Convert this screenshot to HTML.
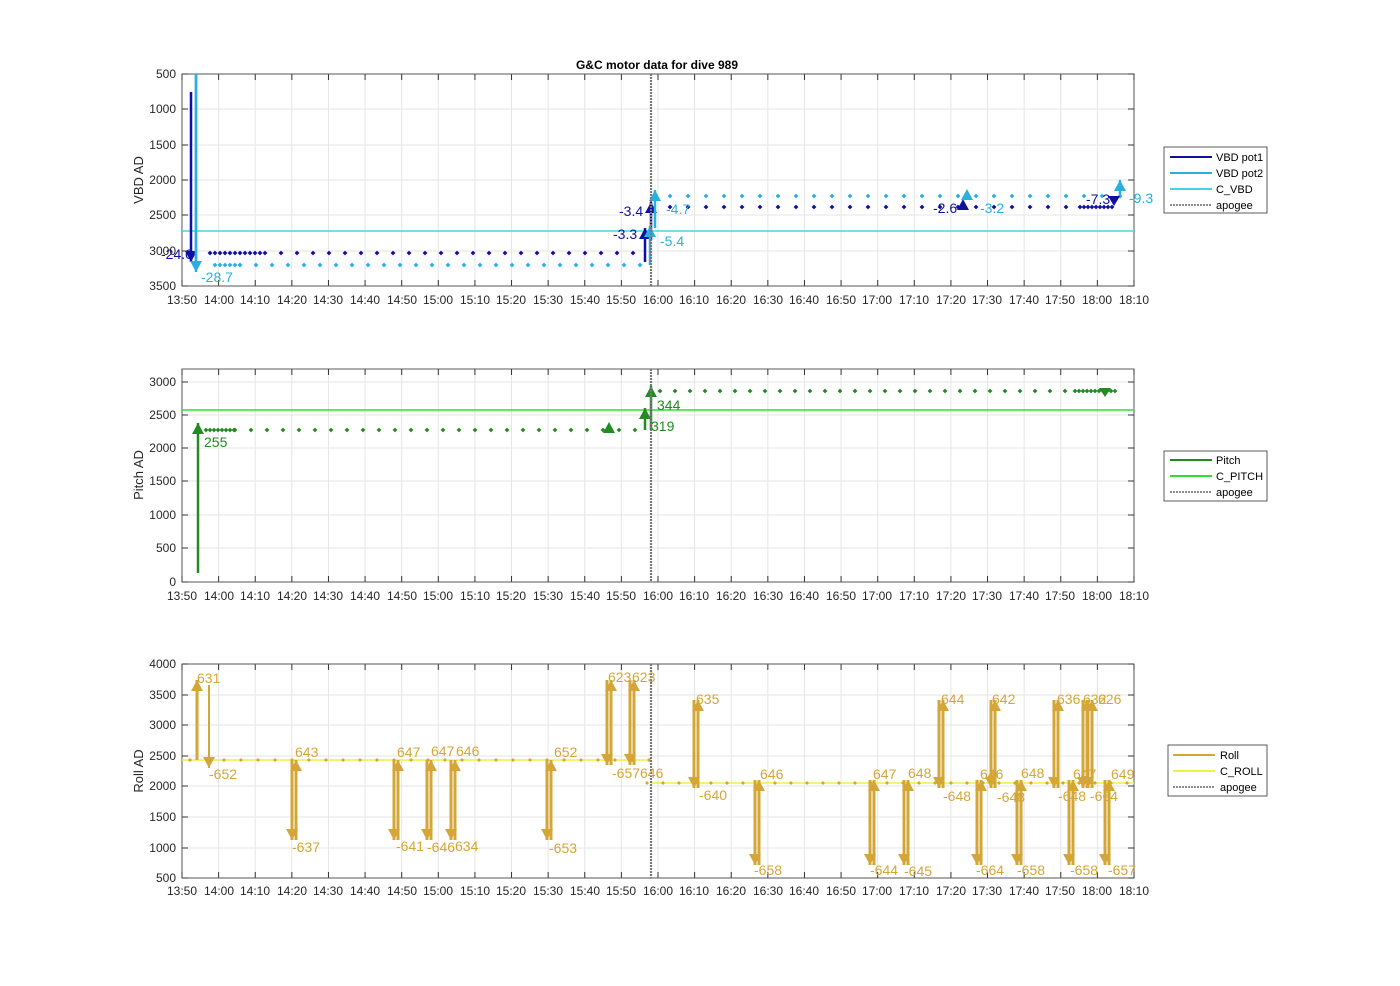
<!DOCTYPE html>
<html><head><meta charset="utf-8"><style>body{margin:0;background:#fff}svg{display:block}text{font-family:"Liberation Sans",sans-serif}</style></head><body>
<svg id="s" width="1400" height="986" xmlns="http://www.w3.org/2000/svg" font-size="12" fill="#262626">
<text x="657" y="69" text-anchor="middle" font-weight="bold" font-size="12" fill="#000">G&amp;C motor data for dive 989</text>
<g id="g"></g>
<g font-size="12" text-anchor="middle">
<g id="xl1"><text x="182" y="304">13:50</text><text x="219" y="304">14:00</text><text x="255" y="304">14:10</text><text x="292" y="304">14:20</text><text x="328" y="304">14:30</text><text x="365" y="304">14:40</text><text x="402" y="304">14:50</text><text x="438" y="304">15:00</text><text x="475" y="304">15:10</text><text x="511" y="304">15:20</text><text x="548" y="304">15:30</text><text x="585" y="304">15:40</text><text x="621" y="304">15:50</text><text x="658" y="304">16:00</text><text x="694" y="304">16:10</text><text x="731" y="304">16:20</text><text x="768" y="304">16:30</text><text x="804" y="304">16:40</text><text x="841" y="304">16:50</text><text x="877" y="304">17:00</text><text x="914" y="304">17:10</text><text x="951" y="304">17:20</text><text x="987" y="304">17:30</text><text x="1024" y="304">17:40</text><text x="1060" y="304">17:50</text><text x="1097" y="304">18:00</text><text x="1134" y="304">18:10</text></g>
<g transform="translate(0,296)"><text x="182" y="304">13:50</text><text x="219" y="304">14:00</text><text x="255" y="304">14:10</text><text x="292" y="304">14:20</text><text x="328" y="304">14:30</text><text x="365" y="304">14:40</text><text x="402" y="304">14:50</text><text x="438" y="304">15:00</text><text x="475" y="304">15:10</text><text x="511" y="304">15:20</text><text x="548" y="304">15:30</text><text x="585" y="304">15:40</text><text x="621" y="304">15:50</text><text x="658" y="304">16:00</text><text x="694" y="304">16:10</text><text x="731" y="304">16:20</text><text x="768" y="304">16:30</text><text x="804" y="304">16:40</text><text x="841" y="304">16:50</text><text x="877" y="304">17:00</text><text x="914" y="304">17:10</text><text x="951" y="304">17:20</text><text x="987" y="304">17:30</text><text x="1024" y="304">17:40</text><text x="1060" y="304">17:50</text><text x="1097" y="304">18:00</text><text x="1134" y="304">18:10</text></g>
<g transform="translate(0,591)"><text x="182" y="304">13:50</text><text x="219" y="304">14:00</text><text x="255" y="304">14:10</text><text x="292" y="304">14:20</text><text x="328" y="304">14:30</text><text x="365" y="304">14:40</text><text x="402" y="304">14:50</text><text x="438" y="304">15:00</text><text x="475" y="304">15:10</text><text x="511" y="304">15:20</text><text x="548" y="304">15:30</text><text x="585" y="304">15:40</text><text x="621" y="304">15:50</text><text x="658" y="304">16:00</text><text x="694" y="304">16:10</text><text x="731" y="304">16:20</text><text x="768" y="304">16:30</text><text x="804" y="304">16:40</text><text x="841" y="304">16:50</text><text x="877" y="304">17:00</text><text x="914" y="304">17:10</text><text x="951" y="304">17:20</text><text x="987" y="304">17:30</text><text x="1024" y="304">17:40</text><text x="1060" y="304">17:50</text><text x="1097" y="304">18:00</text><text x="1134" y="304">18:10</text></g>
</g>
<g text-anchor="end">
<text x="176" y="78">500</text><text x="176" y="113">1000</text><text x="176" y="149">1500</text><text x="176" y="184">2000</text><text x="176" y="219">2500</text><text x="176" y="255">3000</text><text x="176" y="290">3500</text>
<text x="176" y="386">3000</text><text x="176" y="419">2500</text><text x="176" y="452">2000</text><text x="176" y="485">1500</text><text x="176" y="519">1000</text><text x="176" y="552">500</text><text x="176" y="586">0</text>
<text x="176" y="668">4000</text><text x="176" y="699">3500</text><text x="176" y="729">3000</text><text x="176" y="760">2500</text><text x="176" y="790">2000</text><text x="176" y="821">1500</text><text x="176" y="852">1000</text><text x="176" y="882">500</text>
</g>
<text transform="translate(143,180) rotate(-90)" text-anchor="middle" font-size="13">VBD AD</text>
<text transform="translate(143,475) rotate(-90)" text-anchor="middle" font-size="13">Pitch AD</text>
<text transform="translate(143,771) rotate(-90)" text-anchor="middle" font-size="13">Roll AD</text>
<g id="d"></g>
<g font-size="14">
<text x="161" y="259" fill="#1010a0">-24.0</text><text x="201" y="282" fill="#2ab0e0">-28.7</text>
<text x="619" y="216" fill="#1010a0">-3.4</text><text x="613" y="239" fill="#1010a0">-3.3</text>
<text x="666" y="214" fill="#2ab0e0">-4.7</text><text x="660" y="246" fill="#2ab0e0">-5.4</text>
<text x="933" y="213" fill="#1010a0">-2.6</text><text x="980" y="213" fill="#2ab0e0">-3.2</text>
<text x="1086" y="204" fill="#1010a0">-7.3</text><text x="1129" y="203" fill="#2ab0e0">-9.3</text>
<text x="204" y="447" fill="#228b22">255</text><text x="657" y="410" fill="#228b22">344</text><text x="651" y="431" fill="#228b22">319</text>
</g>
<g font-size="14" fill="#d4a637">
<text x="197" y="683">631</text><text x="209" y="779">-652</text><text x="295" y="757">643</text><text x="292" y="852">-637</text>
<text x="397" y="757">647</text><text x="396" y="851">-641</text><text x="431" y="756">647</text><text x="456" y="756">646</text><text x="427" y="852">-646</text><text x="455" y="851">634</text>
<text x="554" y="757">652</text><text x="549" y="853">-653</text><text x="608" y="682">623</text><text x="632" y="682">623</text><text x="612" y="778">-657</text><text x="640" y="778">646</text>
<text x="696" y="704">635</text><text x="699" y="800">-640</text><text x="760" y="779">646</text><text x="754" y="875">-658</text>
<text x="873" y="779">647</text><text x="908" y="778">648</text><text x="870" y="875">-644</text><text x="904" y="876">-645</text>
<text x="941" y="704">644</text><text x="943" y="801">-648</text><text x="980" y="779">646</text><text x="992" y="704">642</text><text x="997" y="802">-648</text><text x="976" y="875">-664</text>
<text x="1021" y="778">648</text><text x="1017" y="875">-658</text><text x="1057" y="704">636</text><text x="1083" y="704">632</text><text x="1098" y="704">626</text>
<text x="1073" y="779">647</text><text x="1058" y="801">-648</text><text x="1090" y="801">-664</text><text x="1103" y="801">9</text><text x="1111" y="779">649</text>
<text x="1070" y="875">-658</text><text x="1108" y="875">-657</text>
</g>
<g font-size="11" fill="#000">
<rect x="1164" y="147" width="103" height="66" fill="#fff" stroke="#333" stroke-width="0.8"/>
<line x1="1170" y1="157" x2="1212" y2="157" stroke="#1010a0" stroke-width="2"/><text x="1216" y="161">VBD pot1</text>
<line x1="1170" y1="173" x2="1212" y2="173" stroke="#2ab0e0" stroke-width="2"/><text x="1216" y="177">VBD pot2</text>
<line x1="1170" y1="189" x2="1212" y2="189" stroke="#40d8e0" stroke-width="2"/><text x="1216" y="193">C_VBD</text>
<line x1="1170" y1="205" x2="1212" y2="205" stroke="#666" stroke-width="1.5" stroke-dasharray="2,1"/><text x="1216" y="209">apogee</text>
<rect x="1164" y="451" width="103" height="50" fill="#fff" stroke="#333" stroke-width="0.8"/>
<line x1="1170" y1="460" x2="1212" y2="460" stroke="#228b22" stroke-width="2"/><text x="1216" y="464">Pitch</text>
<line x1="1170" y1="476" x2="1212" y2="476" stroke="#30e030" stroke-width="2"/><text x="1216" y="480">C_PITCH</text>
<line x1="1170" y1="492" x2="1212" y2="492" stroke="#666" stroke-width="1.5" stroke-dasharray="2,1"/><text x="1216" y="496">apogee</text>
<rect x="1168" y="745" width="99" height="51" fill="#fff" stroke="#333" stroke-width="0.8"/>
<line x1="1173" y1="755" x2="1215" y2="755" stroke="#d4a637" stroke-width="2"/><text x="1220" y="759">Roll</text>
<line x1="1173" y1="771" x2="1215" y2="771" stroke="#f0f040" stroke-width="2"/><text x="1220" y="775">C_ROLL</text>
<line x1="1173" y1="787" x2="1215" y2="787" stroke="#666" stroke-width="1.5" stroke-dasharray="2,1"/><text x="1220" y="791">apogee</text>
</g>
</svg>
<script>
var NS="http://www.w3.org/2000/svg",g=document.getElementById('g'),d=document.getElementById('d');
function el(p,n,a){var e=document.createElementNS(NS,n);for(var k in a)e.setAttribute(k,a[k]);p.appendChild(e);return e;}
var axes=[[74,286,[74,109,145,180,215,251,286]],[369,582,[382,415,448,481,515,548,582]],[664,878,[664,695,725,756,786,817,848,878]]];
axes.forEach(function(a){
 for(var i=0;i<=26;i++){var x=182+i*36.615;el(g,'line',{x1:x,y1:a[0],x2:x,y2:a[1],stroke:'#e6e6e6'});el(g,'line',{x1:x,y1:a[1],x2:x,y2:a[1]-6,stroke:'#333'});el(g,'line',{x1:x,y1:a[0],x2:x,y2:a[0]+6,stroke:'#333'});}
 a[2].forEach(function(y){el(g,'line',{x1:182,y1:y,x2:1134,y2:y,stroke:'#e6e6e6'});el(g,'line',{x1:182,y1:y,x2:188,y2:y,stroke:'#333'});el(g,'line',{x1:1134,y1:y,x2:1128,y2:y,stroke:'#333'});});
 el(g,'rect',{x:182,y:a[0],width:952,height:a[1]-a[0],fill:'none',stroke:'#333','stroke-width':0.8});
});
function dots(c,y,x0,x1,st,r){r=r||2.4;for(var x=x0;x<=x1;x+=st)el(d,'path',{d:'M'+x+' '+(y-r)+'L'+(x+r)+' '+y+'L'+x+' '+(y+r)+'L'+(x-r)+' '+y+'Z',fill:c});}
function hl(c,y,x0,x1){el(d,'line',{x1:x0,y1:y,x2:x1,y2:y,stroke:c,'stroke-width':1.5});}
function arr(c,x,y0,y1,w){el(d,'line',{x1:x,y1:y0,x2:x,y2:y1,stroke:c,'stroke-width':w||2.5});var s=y1<y0?1:-1;el(d,'path',{d:'M'+(x-6)+' '+(y1+s*11)+'L'+(x+6)+' '+(y1+s*11)+'L'+x+' '+y1+'Z',fill:c});}
function dbl(c,x,y0,y1){arr(c,x-2,y0,y1,3);arr(c,x+2,y1,y0,3);}
var DB='#1010a0',CY='#2ab0e0';
hl('#40d8e0',231,182,1134);
dots(DB,253,210,262,5);dots(DB,253,265,640,16);dots(CY,265,215,240,5);dots(CY,265,240,640,16);
dots(DB,207,670,1080,18);dots(DB,207,1080,1115,4);dots(CY,196,670,1120,18);
arr(DB,191,92,262);el(d,'line',{x1:196,y1:74,x2:196,y2:265,stroke:CY,'stroke-width':2.5});arr(CY,196,74,272);
arr(DB,645,262,228);arr(DB,651,240,202);arr(CY,650,265,226);arr(CY,655,228,190);
el(d,'path',{d:'M957 210L969 210L963 199Z',fill:DB});el(d,'path',{d:'M961 200L973 200L967 189Z',fill:CY});
arr(CY,1120,198,180);el(d,'path',{d:'M1108 196L1120 196L1114 206Z',fill:DB});
var GR='#228b22';hl('#30e030',410,182,1134);
dots(GR,430,206,235,4);dots(GR,430,235,640,16);dots(GR,391,660,1075,15);dots(GR,391,1075,1118,4);
arr(GR,198,573,423);arr(GR,645,430,408);arr(GR,651,430,386);
el(d,'path',{d:'M603 433L615 433L609 422Z',fill:GR});el(d,'path',{d:'M1099 388L1111 388L1105 397Z',fill:GR});
var GO='#d4a637';hl('#f0f040',760,182,651);hl('#f0f040',783,651,1134);
dots(GO,760,190,650,17,2);dots(GO,783,647,1134,16,2);
arr(GO,197,760,680,3);arr(GO,209,685,768,2);
[[294,760,840],[396,760,840],[429,760,840],[453,760,840],[549,760,840],[609,680,765],[632,680,765],[696,700,788],[757,780,865],[872,780,865],[906,780,865],[941,700,788],[979,780,865],[993,700,788],[1019,780,865],[1056,700,788],[1085,700,788],[1090,700,788],[1071,780,865],[1107,780,865]].forEach(function(a){dbl(GO,a[0],a[1],a[2]);});
[[74,286],[369,582],[664,878]].forEach(function(a){el(d,'line',{x1:651,y1:a[0],x2:651,y2:a[1],stroke:'#777','stroke-width':2.2,'stroke-dasharray':'2,1'});});
</script>
</body></html>
